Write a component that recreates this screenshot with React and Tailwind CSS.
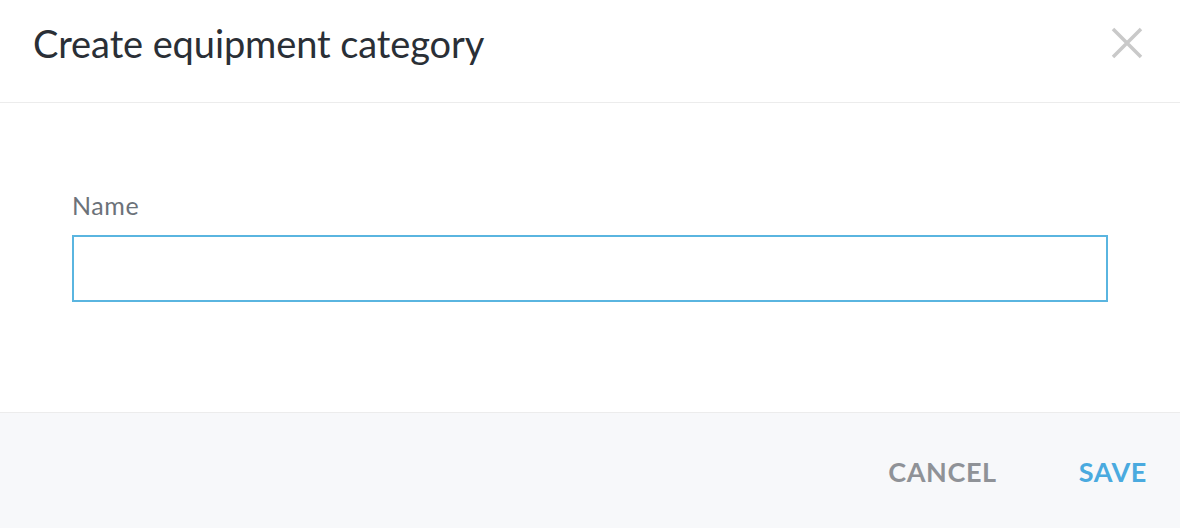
import { useState } from "react";

export default function App() {
  const [name, setName] = useState("");

  return (
    <div className="w-[1180px] h-[528px] bg-white flex flex-col font-['Lato','Open_Sans',sans-serif]">
      {/* Header */}
      <header className="h-[103px] flex items-center justify-between pl-[33px] pr-[36px] border-b border-[#ececec]">
        <h1 className="text-[38px] leading-none text-[#2a2f36] tracking-[-0.1px] -mt-[16px]">Create equipment category</h1>
        <button aria-label="Close" className="-mt-[16px]">
          <svg width="34" height="34" viewBox="0 0 34 34">
            <path d="M3 3 L31 31 M31 3 L3 31" stroke="#c9c9c9" strokeWidth="3.5" />
          </svg>
        </button>
      </header>

      {/* Body */}
      <main className="flex-1 px-[72px] pt-[87px]">
        <label className="block text-[25px] leading-[30px] text-[#6c7279] tracking-[0.6px] mb-[15px]">Name</label>
        <input
          value={name}
          onChange={(e) => setName(e.target.value)}
          className="block w-[1036px] h-[67px] border-2 border-[#5ab5e0] outline-none px-4 text-[20px]"
        />
      </main>

      {/* Footer */}
      <footer className="h-[116px] bg-[#f7f8fa] border-t border-[#ececec] flex items-center justify-end gap-[82px] pr-[33px] pt-[4px]">
        <button className="text-[27px] font-bold text-[#8f9297] tracking-[0.6px]">CANCEL</button>
        <button className="text-[27px] font-bold text-[#4aaadf] tracking-[0.6px]">SAVE</button>
      </footer>
    </div>
  );
}
